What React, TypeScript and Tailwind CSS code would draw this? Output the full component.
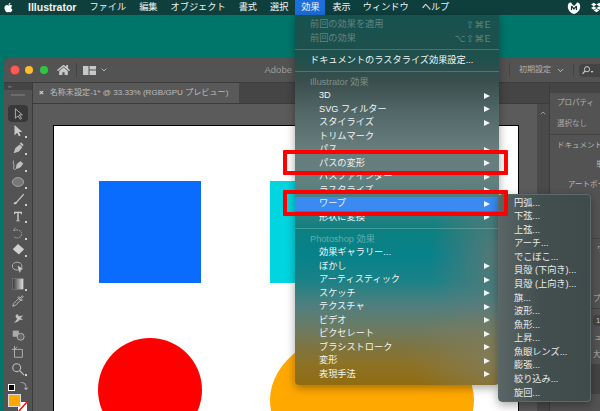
import { ChevronDown, ChevronUp } from "lucide-react";
import { FaApple, FaDropbox, FaHome } from "react-icons/fa";

const font = "font-['Liberation_Sans','Noto_Sans_CJK_JP',sans-serif]";

type Row =
  | { kind: "sep" }
  | { kind: "head"; label: string }
  | { kind: "off"; label: string; keys: string }
  | { kind: "doc"; label: string }
  | { kind: "item"; label: string; arrow?: boolean; active?: boolean };

const rows: Row[] = [
  { kind: "off", label: "前回の効果を適用", keys: "⇧⌘E" },
  { kind: "off", label: "前回の効果", keys: "⌥⇧⌘E" },
  { kind: "sep" },
  { kind: "doc", label: "ドキュメントのラスタライズ効果設定..." },
  { kind: "sep" },
  { kind: "head", label: "Illustrator 効果" },
  { kind: "item", label: "3D", arrow: true },
  { kind: "item", label: "SVG フィルター", arrow: true },
  { kind: "item", label: "スタイライズ", arrow: true },
  { kind: "item", label: "トリムマーク" },
  { kind: "item", label: "パス", arrow: true },
  { kind: "item", label: "パスの変形", arrow: true },
  { kind: "item", label: "パスファインダー", arrow: true },
  { kind: "item", label: "ラスタライズ", arrow: true },
  { kind: "item", label: "ワープ", arrow: true, active: true },
  { kind: "item", label: "形状に変換", arrow: true },
  { kind: "sep" },
  { kind: "head", label: "Photoshop 効果" },
  { kind: "item", label: "効果ギャラリー..." },
  { kind: "item", label: "ぼかし", arrow: true },
  { kind: "item", label: "アーティスティック", arrow: true },
  { kind: "item", label: "スケッチ", arrow: true },
  { kind: "item", label: "テクスチャ", arrow: true },
  { kind: "item", label: "ビデオ", arrow: true },
  { kind: "item", label: "ピクセレート", arrow: true },
  { kind: "item", label: "ブラシストローク", arrow: true },
  { kind: "item", label: "変形", arrow: true },
  { kind: "item", label: "表現手法", arrow: true },
];

const warp = [
  "円弧...",
  "下弦...",
  "上弦...",
  "アーチ...",
  "でこぼこ...",
  "貝殻 (下向き)...",
  "貝殻 (上向き)...",
  "旗...",
  "波形...",
  "魚形...",
  "上昇...",
  "魚眼レンズ...",
  "膨張...",
  "絞り込み...",
  "旋回...",
];

const tools = [
  <path d="M5 2v11l3-3 2.5 4 1.5-1-2.5-4H13z" fill="none" stroke="#bdbdbd" />,
  <path d="M4 1v12l3-3 2 4 2-1-2-4h4z" fill="#c8c8c8" />,
  <path d="M3 14l2-6 5-4 3 3-4 5zM10 3l1.5-1.5 3 3L13 6" fill="#c0c0c0" />,
  <g fill="none" stroke="#c0c0c0">
    <path d="M6 12l1-5 4-3 2.5 2.5-3 4z" fill="#c0c0c0" />
    <path d="M3 3c-2 3 2 5 0 8-1 2 2 3 3 1" />
  </g>,
  <ellipse cx="8" cy="8" rx="6.5" ry="5" fill="#777" stroke="#aaa" />,
  <path d="M3 14c0-2 1-3 3-3l8-9 1 1-8 9c0 2-2 2-4 2z" fill="#c8c8c8" />,
  <path d="M3.5 3h9v3h-1l-.8-1.500H8.800V13H10v1H6v-1h1.200V4.500H5.300L4.500 6h-1z" fill="#cfcfcf" />,
  <path d="M5 2L3 5h3M3 5c6-2 10 1 9 5-1 4-6 5-9 2" fill="none" stroke="#aaa" strokeDasharray="2 1" />,
  <path d="M8 1l7 6-6 6-7-6z" fill="#d0d0d0" />,
  <g fill="none" stroke="#b8b8b8">
    <ellipse cx="7" cy="7" rx="5.5" ry="4.500" />
    <path d="M8 7l5 3-2 1-1 3z" fill="#d0d0d0" />
  </g>,
  <g>
    <defs>
      <linearGradient id="tool-gradient" x1="0" x2="1" y1="0" y2="0">
        <stop offset="0" stopColor="#3a3a3a" />
        <stop offset="1" stopColor="#e0e0e0" />
      </linearGradient>
    </defs>
    <rect x="2" y="2" width="12" height="12" fill="url(#tool-gradient)" stroke="#888" strokeWidth="0.5" />
  </g>,
  <path d="M2 14l1-3 6-6 2 2-6 6zM9 3l1.500 1.500L13 2l1 1-2.500 2.500L13 7l-1 1-4-4z" fill="none" stroke="#c0c0c0" />,
  <path d="M2 13c3 0 3-2 5-4l-2-3 2-3 2 3 5-1-3 3 3 2-4 0c-2 2-4 4-8 3z" fill="#c0c0c0" />,
  <g>
    <rect x="2" y="3" width="7" height="7" fill="#aaa" />
    <circle cx="11" cy="10" r="4" fill="#666" stroke="#b8b8b8" />
  </g>,
  <path d="M1 5h3V1M4 5h9v9H4zM4 5l3-3" fill="none" stroke="#b8b8b8" />,
  <g fill="none" stroke="#bcbcbc" strokeWidth="1.300">
    <circle cx="6.5" cy="6.5" r="4.500" />
    <path d="M10 10l5 5" />
  </g>,
];

function Tool({ children, selected, corner }: { children: React.ReactNode; selected?: boolean; corner?: boolean }) {
  return (
    <div className={`relative mx-auto flex h-[17px] w-[20px] items-center justify-center rounded-sm ${selected ? "bg-[#383838]" : ""}`}>
      <svg width="14" height="14" viewBox="0 0 16 16">
        {children}
      </svg>
      {corner && <span className="absolute bottom-[1px] right-[1px] h-[2px] w-[2px] bg-[#cfcfcf]" />}
    </div>
  );
}

function Menu() {
  return (
    <div className="absolute left-[295px] top-[15px] w-[204px] rounded-b-[4px] bg-[radial-gradient(ellipse_70px_85px_at_100%_240px,rgba(105,118,116,0.85),rgba(105,118,116,0)),radial-gradient(ellipse_90px_60px_at_100%_345px,rgba(128,126,100,0.8),rgba(128,126,100,0)),linear-gradient(to_bottom,#17524f_0px,#1f504c_43px,#3a4e4c_66px,#54696a_100px,#677d7c_133px,#63807f_166px,#3a8085_190px,#0c8080_216px,#06828a_240px,#1a8286_266px,#4f7f7f_290px,#6f7a5f_316px,#7e7440_333px,#8d7225_350px,#8f6c10_370px)] pb-[4px] pt-[3px] text-[9.2px] leading-none text-[#f1f4f3] shadow-[0_3px_10px_rgba(0,0,0,0.35)]">
      {rows.map((row, i) => {
        if (row.kind === "sep") {
          return (
            <div key={i} className="flex h-[8.5px] items-center">
              <div className="h-px w-full bg-[rgba(255,255,255,0.2)]" />
            </div>
          );
        }
        if (row.kind === "off") {
          return (
            <div key={i} className="flex h-[13.5px] items-center justify-between pl-[15px] pr-[8px] text-[rgba(255,255,255,0.3)]">
              <span>{row.label}</span>
              <span className="font-['DejaVu_Sans',sans-serif] text-[9.5px] tracking-[0.5px]">{row.keys}</span>
            </div>
          );
        }
        if (row.kind === "head") {
          return (
            <div key={i} className="flex h-[13.5px] items-center pl-[15px] text-[rgba(255,255,255,0.36)]">
              {row.label}
            </div>
          );
        }
        if (row.kind === "doc") {
          return (
            <div key={i} className="flex h-[13.5px] items-center pl-[15px]">
              {row.label}
            </div>
          );
        }
        return (
          <div key={i} className={`flex h-[13.5px] items-center justify-between pl-[24px] pr-[9px] ${row.active ? "bg-[#3a8af2]" : ""}`}>
            <span>{row.label}</span>
            {row.arrow && <span className="h-0 w-0 border-y-[3.5px] border-l-[6px] border-y-transparent border-l-[#f1f4f3]" />}
          </div>
        );
      })}
    </div>
  );
}

export default function App() {
  return (
    <div className={`relative flex h-[411px] w-[600px] flex-col overflow-hidden bg-[#00766b] ${font}`}>
      <header className="flex h-[15px] shrink-0 items-center bg-[#0e3f3d] text-[9.2px] leading-none text-[#f0f4f3]">
        <FaApple className="ml-[3px] h-[11px] w-[11px] text-white" />
        <span className="ml-[14px] text-[10.5px] font-bold">Illustrator</span>
        <span className="ml-[13px]">ファイル</span>
        <span className="ml-[13px]">編集</span>
        <span className="ml-[13px]">オブジェクト</span>
        <span className="ml-[13px]">書式</span>
        <span className="ml-[13px]">選択</span>
        <span className="ml-[7px] flex h-[15px] w-[30px] items-center justify-center bg-[#1b6fdc]">効果</span>
        <span className="ml-[7px]">表示</span>
        <span className="ml-[12px]">ウィンドウ</span>
        <span className="ml-[13px]">ヘルプ</span>
        <svg className="ml-auto mr-[10px]" width="14" height="12" viewBox="0 0 14 12">
          <path d="M1 3C2 0 4 0 5 2l2 2 2-2c1-2 3-2 4 1 1 4-2 8-6 9C3 11 0 7 1 3z" fill="#fff" />
          <path d="M4.5 4v4M9.5 4v4M4.5 4L7 7l2.5-3" fill="none" stroke="#0e3f3d" strokeWidth="1.200" />
        </svg>
        <FaDropbox className="-mr-[2px] h-[11px] w-[11px] text-white" />
      </header>

      <div className="flex min-h-0 flex-1 pl-[4px] pt-[43px]">
        <div className="flex min-w-0 flex-1 flex-col overflow-hidden rounded-tl-[5px] bg-[#3c3c3c]">
          <div className="flex h-[24px] shrink-0 items-center bg-[#535353] text-[9.5px] text-[#9c9c9c]">
            <span className="ml-[6.5px] h-[8px] w-[8px] shrink-0 rounded-full bg-[#fc5b57] ring-1 ring-[#c9403c]" />
            <span className="ml-[6.5px] h-[8px] w-[8px] shrink-0 rounded-full bg-[#fdbb2e]" />
            <span className="ml-[6.5px] h-[8px] w-[8px] shrink-0 rounded-full bg-[#2ac840]" />
            <FaHome className="ml-[9px] h-[12px] w-[13px] shrink-0 text-[#c8c8c8]" />
            <span className="ml-[6px] h-[14px] w-px shrink-0 bg-[#444]" />
            <svg className="ml-[6px] shrink-0" width="13" height="9" viewBox="0 0 13 9">
              <path d="M0 0h5.500v9H0zM6.500 0H13v3.500H6.500zM6.500 4.500H13V9H6.500z" fill="#c8c8c8" />
            </svg>
            <ChevronDown className="ml-[4px] h-[8px] w-[8px] shrink-0 text-[#c8c8c8]" strokeWidth={2.5} />
            <span className="ml-[157px] shrink-0">Adobe</span>
            <span className="ml-[217px] h-[14px] w-px shrink-0 bg-[#444]" />
            <span className="ml-[9px] shrink-0 whitespace-nowrap text-[8px] text-[#b0b0b0]">初期設定</span>
            <ChevronDown className="ml-[5px] h-[9px] w-[9px] shrink-0 text-[#c8c8c8]" strokeWidth={2.5} />
            <span className="ml-[8px] h-[14px] w-px shrink-0 bg-[#444]" />
            <span className="ml-[5px] flex h-[13px] w-[40px] shrink-0 items-center rounded-sm bg-[#444] pl-[3px]">
              <svg width="12" height="9" viewBox="0 0 12 9">
                <circle cx="5" cy="3.200" r="2.600" fill="none" stroke="#c8c8c8" />
                <path d="M3 5L.6 7.800" stroke="#c8c8c8" strokeWidth="1.200" />
                <path d="M8.500 5h3L10 7z" fill="#c8c8c8" />
              </svg>
            </span>
          </div>

          <div className="flex min-h-0 flex-1 gap-px border-t border-[#3c3c3c]">
            <aside className="flex w-[28px] shrink-0 flex-col bg-[#535353]">
              <div className="flex h-[7px] items-center bg-[#444] pl-[4px] text-[5px] leading-none text-[#aaa]">››</div>
              <div className="mx-auto mt-[4px] h-[2px] w-[14px] bg-[#6b6b6b]" />
              <div className="mt-[9px]">
                {tools.map((t, i) => (
                  <Tool key={i} selected={i === 0} corner={[1, 2, 3, 4, 5, 6, 7, 8, 10, 15].includes(i)}>
                    {t}
                  </Tool>
                ))}
              </div>
              <div className="mt-[6px] flex items-center gap-[5px] pl-[4px]">
                <span className="h-[7px] w-[7px] border border-white bg-black" />
                <span className="text-[8px] leading-none text-[#ccc]">⤵</span>
              </div>
              <div className="relative ml-[4px] mt-[3px]">
                <svg className="absolute left-[10px] top-[8px]" width="9" height="10" viewBox="0 0 9 10">
                  <rect width="9" height="10" fill="#fff" />
                  <path d="M0 10L9 0" stroke="#ff0000" strokeWidth="1.500" />
                </svg>
                <div className="relative h-[13px] w-[13px] border border-[#ddd] bg-[#ffa800]" />
              </div>
            </aside>

            <div className="flex min-w-0 flex-1 flex-col">
              <div className="flex h-[20px] shrink-0 bg-[#454545]">
                <div className="flex w-[206px] items-center bg-[#595959] pl-[6px] text-[8.1px] leading-none text-[#bcbcbc]">
                  <span className="mr-[6px] text-[8px] font-bold text-[#e0e0e0]">×</span>
                  <span className="whitespace-nowrap">名称未設定-1* @ 33.33% (RGB/GPU プレビュー)</span>
                </div>
              </div>
              <div className="flex min-h-0 flex-1 border-t border-[#3c3c3c]">
                <div className="min-w-0 flex-1 bg-[#5b5b5b] pl-[20px] pt-[21px]">
                  <div className="relative h-[400px] w-[466px] border border-black bg-white">
                    <div className="absolute left-[45px] top-[55px] h-[102px] w-[102px] bg-[#0a6cff]" />
                    <div className="absolute left-[216px] top-[55px] h-[102px] w-[204px] bg-[#00d5e0]" />
                    <div className="absolute left-[44px] top-[212px] h-[104px] w-[104px] rounded-full bg-[#ff0000]" />
                    <div className="absolute left-[216px] top-[202px] h-[144px] w-[204px] rounded-[50%] bg-[#ffa800]" />
                  </div>
                </div>
                <div className="flex w-[12px] shrink-0 justify-center bg-[#4a4a4a] pt-[5px]">
                  <ChevronUp className="h-[8px] w-[8px] text-[#a8a8a8]" strokeWidth={2.5} />
                </div>
              </div>
            </div>

            <aside className="w-[50px] shrink-0 overflow-hidden bg-[#454545] pt-[10px] text-[7.5px] leading-none whitespace-nowrap text-[#b4b4b4]">
              <div className="h-[400px] bg-[#535353]">
                <div className="flex h-[20px] items-center pl-[7px]">プロパティ</div>
                <div className="flex h-[22px] items-center border-b border-[#444] pl-[7px] text-[#a8a8a8]">選択なし</div>
                <div className="flex h-[22px] items-center pl-[7px]">ドキュメント</div>
                <div className="flex h-[16px] items-center pl-[46px]">単位</div>
                <div className="flex h-[24px] items-center pl-[18px]">アートボード</div>
                <div className="flex h-[42px] items-end border-b border-[#444] pb-[6px] pl-[46px]" />
                <div className="flex h-[20px] items-center pl-[47px]">ウ</div>
                <div className="flex h-[50px] items-end border-b border-[#444] pb-[6px] pl-[43px]">プ</div>
                <div className="ml-[43px] mt-[6px] h-[11px] rounded-l-sm bg-[#444] pl-[3px] pt-[2px] text-[#ccc]">1</div>
                <div className="mt-[8px] pl-[44px]">ュ</div>
                <div className="mt-[9px] pl-[43px]">大</div>
                <div className="mt-[6px] h-[30px] bg-[#444]" />
              </div>
            </aside>
          </div>
        </div>
      </div>

      <Menu />

      <div className="absolute left-[498px] top-[194px] h-[208px] w-[93px] rounded-[4px] border border-[#5e6a69] bg-[linear-gradient(to_right,#5a6666,#434e4e_45%,#3f4a4a)] py-[1.5px] pl-[15px] text-[9.2px] leading-none text-[#e9eceb] shadow-[0_3px_10px_rgba(0,0,0,0.35)]">
        {warp.map((w) => (
          <div key={w} className="flex h-[13.57px] items-center whitespace-nowrap">
            {w}
          </div>
        ))}
      </div>

      <div className="absolute left-[283px] top-[150px] h-[25px] w-[225px] rounded-[1px] border-[4px] border-[#ff0000]" />
      <div className="absolute left-[283px] top-[190px] h-[26px] w-[225px] rounded-[1px] border-[4px] border-[#ff0000]" />
    </div>
  );
}
